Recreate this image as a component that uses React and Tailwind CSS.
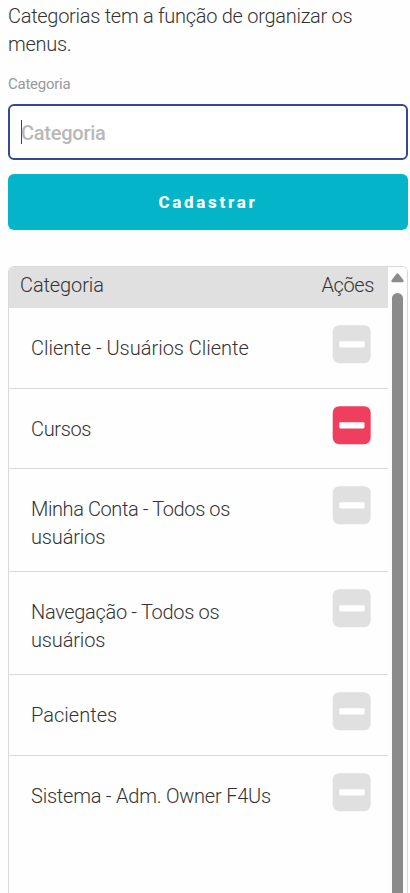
import React from "react";

const rows = [
  { lines: [["Cliente - Usuários Cliente", "tracking-[-0.01px]"]], height: "h-[81px]" },
  { lines: [["Cursos", "tracking-[-0.35px]"]], height: "h-[80px]", active: true },
  { lines: [["Minha Conta - Todos os", "tracking-[-0.4px]"], ["usuários", "tracking-[-0.15px]"]], height: "h-[103px]" },
  { lines: [["Navegação - Todos os", "tracking-[-0.32px]"], ["usuários", "tracking-[-0.15px]"]], height: "h-[103px]" },
  { lines: [["Pacientes", "tracking-[0.03px]"]], height: "h-[81px]" },
  { lines: [["Sistema - Adm. Owner F4Us", "tracking-[-0.22px]"]], height: "h-[81px]", last: true },
];

function MinusButton({ active }) {
  return (
    <button type="button" aria-label="Remover" className={`mt-[17px] mr-[17px] h-[38px] w-[38px] shrink-0 ${active ? "text-[#f03e5e]" : "text-[#e0e0e0]"}`}>
      <svg width="38" height="38" viewBox="0 0 38 38" className="block overflow-visible">
        <rect x="-0.3" y="0.2" width="38" height="38" rx="6.5" fill="currentColor" />
        <rect x="6.3" y="16.2" width="25.2" height="6.2" rx="1.1" fill="#fff" />
      </svg>
    </button>
  );
}

export default function App() {
  return (
    <main className="flex h-[893px] w-[410px] flex-col overflow-hidden bg-[#fefefe] pr-[2px] pl-2 font-['Roboto','Liberation_Sans',sans-serif] text-xl leading-7 font-light text-[#333]">
      <p className="mt-[2px] h-14 whitespace-nowrap tracking-[-0.28px]">
        Categorias tem a função de organizar os
        <br />
        menus.
      </p>
      <label className="mt-[15px] h-[22px] text-[15px] leading-[22px] font-normal tracking-[-0.25px] text-[#999]">Categoria</label>
      <div className="mt-[9px] flex h-14 shrink-0 items-center rounded-md border-2 border-[#364891] bg-white pl-[11px]">
        <span className="h-6 w-px bg-[#444]" />
        <span className="mt-[2px] -ml-px font-medium tracking-[-0.25px] text-[#b8b8b8]">Categoria</span>
      </div>
      <button type="button" className="mt-[14px] h-14 shrink-0 rounded-md bg-[#04b4c9] text-[17px] font-extrabold tracking-[2.7px] text-white">
        Cadastrar
      </button>
      <section className="mt-9 flex h-[627px] shrink-0 overflow-hidden rounded-t-md border border-b-0 border-[#d9d9d9]">
        <div className="min-w-0 flex-1">
          <header className="flex h-[41px] justify-between bg-[#e0e0e0] pt-[4px] pr-[14px] pl-[11px]">
            <span className="tracking-[-0.1px]">Categoria</span>
            <span className="tracking-[-0.4px]">Ações</span>
          </header>
          {rows.map((row) => (
            <div key={row.lines[0][0]} className={`flex items-start justify-between ${row.height} ${row.last ? "" : "border-b border-[#d9d9d9]"}`}>
              <div className="pt-[26px] pl-[22px] whitespace-nowrap">
                {row.lines.map(([text, tracking]) => (
                  <div key={text} className={tracking}>{text}</div>
                ))}
              </div>
              <MinusButton active={row.active} />
            </div>
          ))}
        </div>
        <div className="flex w-[19px] shrink-0 flex-col items-center bg-[#fcfcfc]">
          <svg width="13" height="10" viewBox="0 0 13 10" className="mt-[6px] block">
            <path d="M5.5 0.7Q6.5 -0.3 7.5 0.7L12.3 7Q13.2 9 11.5 9.3H1.5Q-0.2 9 0.7 7Z" fill="#8b8b8b" />
          </svg>
          <span className="mt-[10px] w-[11px] flex-1 rounded-t-full bg-[#8b8b8b]" />
        </div>
      </section>
    </main>
  );
}
